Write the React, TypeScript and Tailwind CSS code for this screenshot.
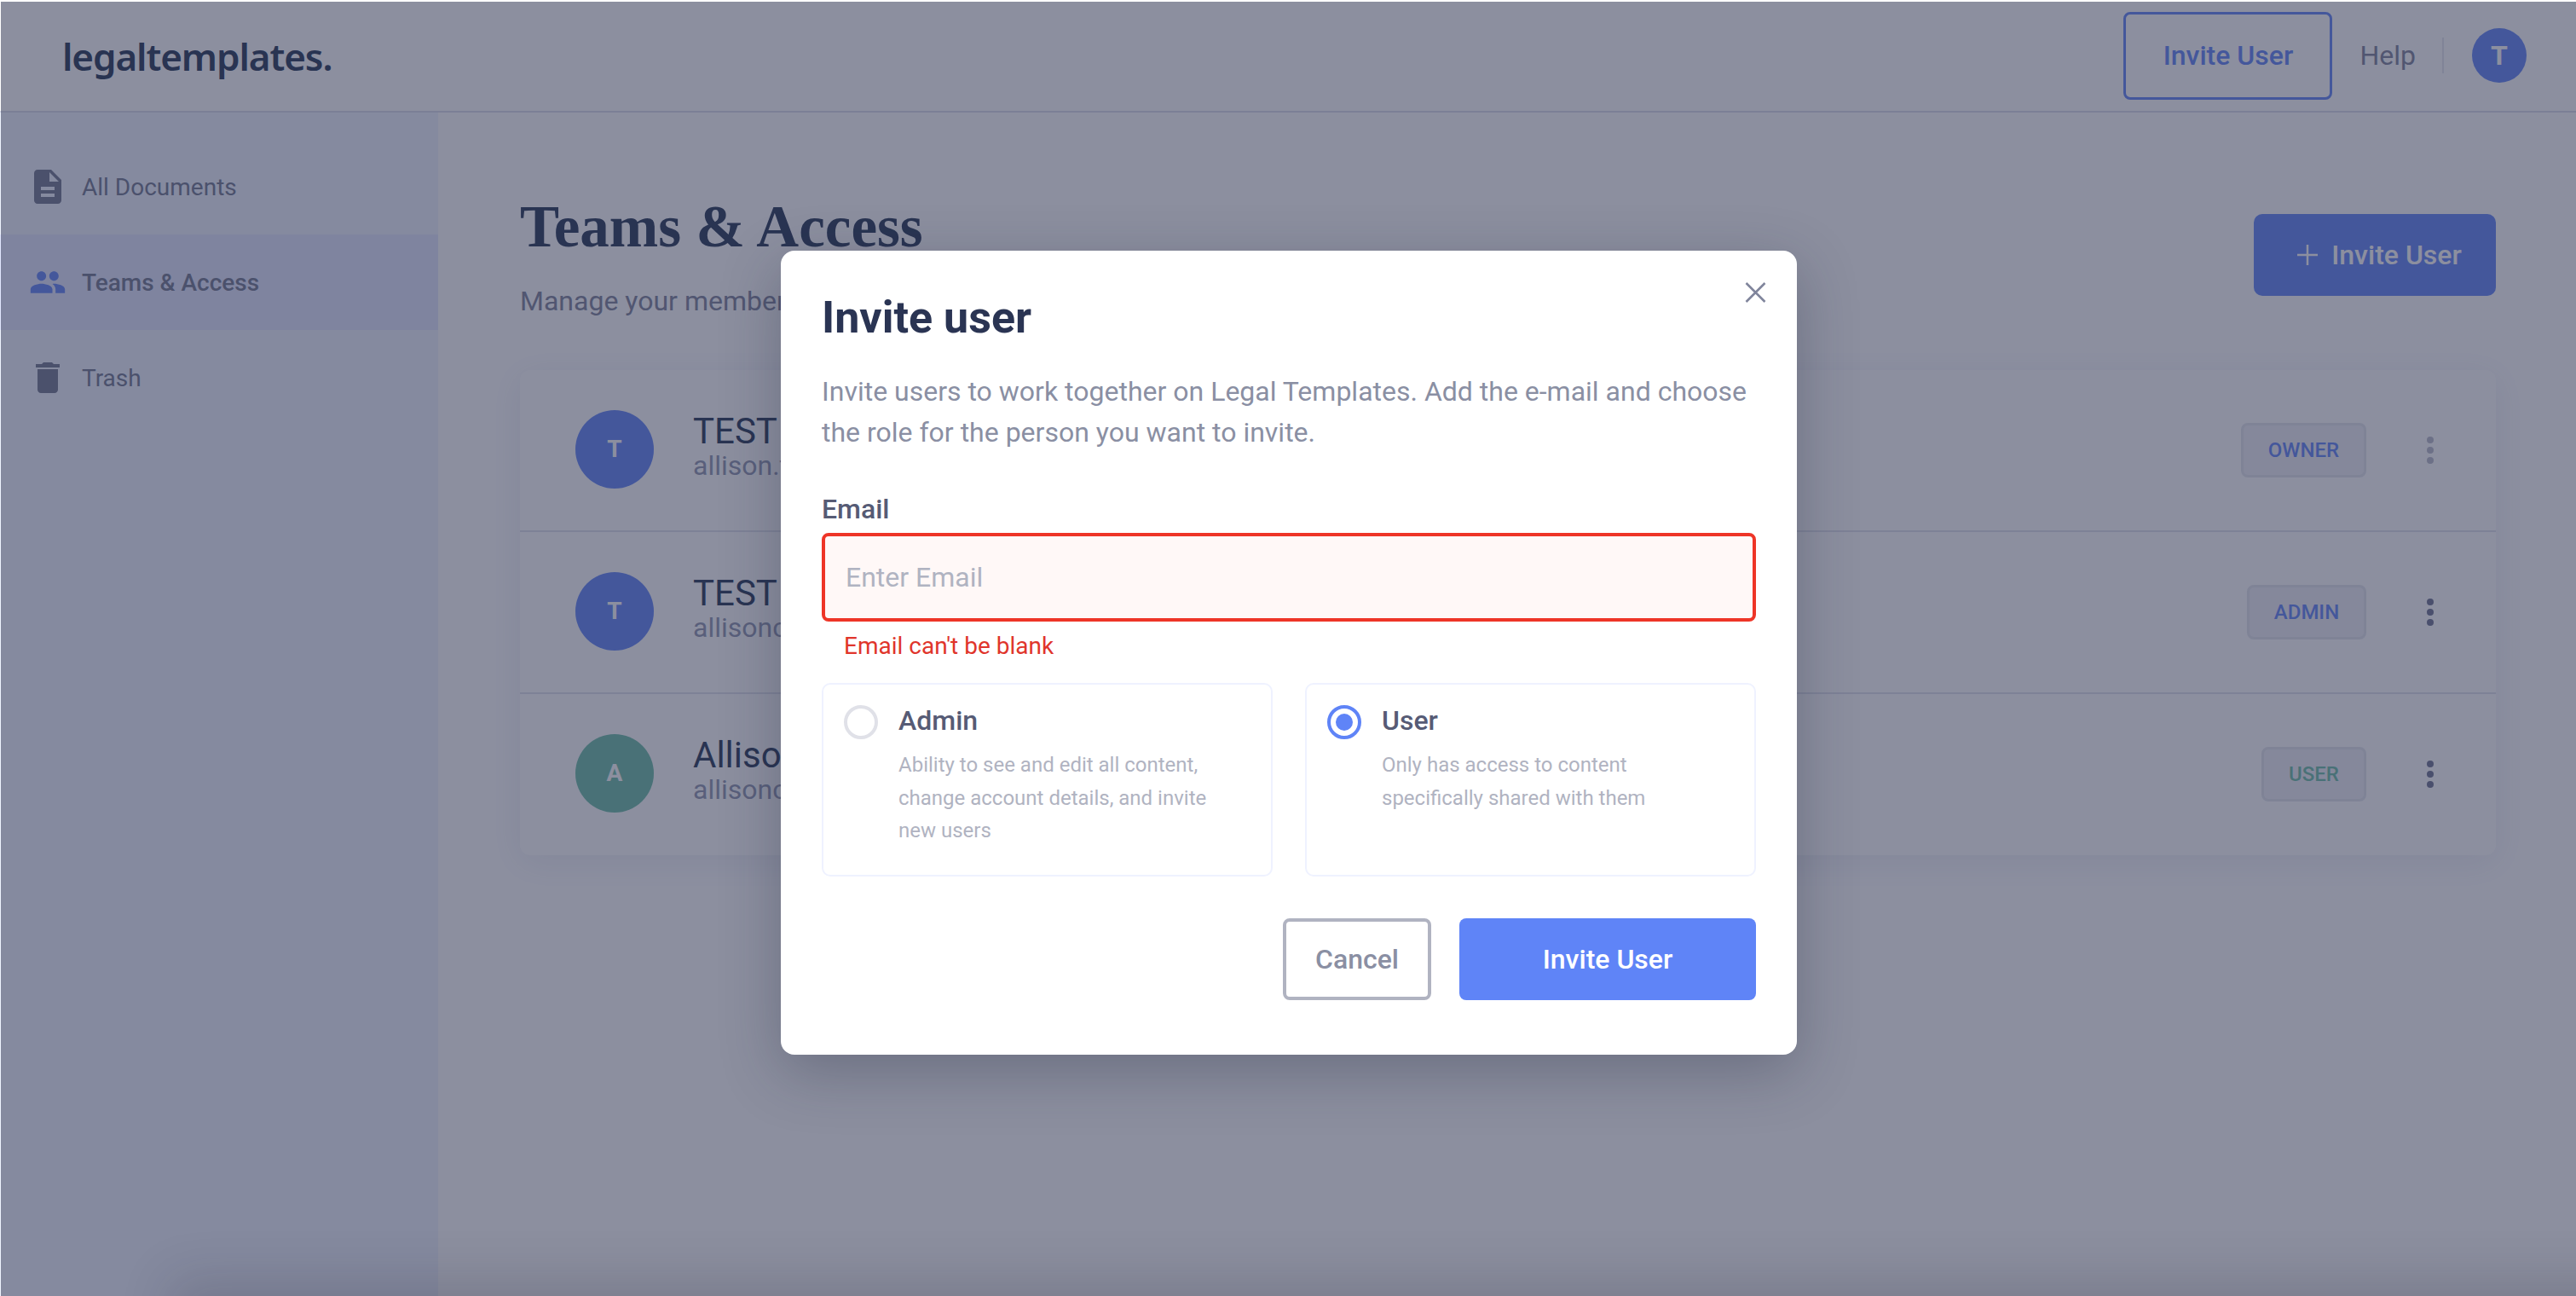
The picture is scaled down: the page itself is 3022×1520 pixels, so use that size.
import React from "react";
import { MdDescription, MdPeople, MdDelete } from "react-icons/md";

const roboto = "font-['Roboto',sans-serif]";

function Row({ letter, name, email, role, avatar, roleText, badgeW, dots, last }: { letter: string; name: string; email: string; role: string; avatar: string; roleText: string; badgeW: string; dots: string; last?: boolean }) {
  return (
    <div className={`flex items-start pl-[65px] ${last ? "h-[189px]" : "h-[190px] border-b-[2px] border-[#dfe2ec]"}`}>
      <div className={`mt-[47px] flex h-[92px] w-[92px] shrink-0 items-center justify-center rounded-full text-[28px] font-bold text-white ${avatar}`}>{letter}</div>
      <div className="ml-[46px] mt-[47px] min-w-0 flex-1">
        <div className="text-[42px] leading-[50px] text-[#253556]">{name}</div>
        <div className="mt-[-5px] text-[32px] leading-[40px] text-[#8f96b0]">{email}</div>
      </div>
      <div className={`mt-[62px] flex h-[64px] items-center justify-center rounded-[8px] border-[3px] border-[#e2e4ec] bg-[#eff0f5] text-[24px] font-medium ${badgeW} ${roleText}`}>{role}</div>
      <div className="mt-[78px] ml-[71px] mr-[73px] flex w-[8px] flex-col gap-[4px]">
        <span className={`h-[8px] w-[8px] rounded-full ${dots}`} />
        <span className={`h-[8px] w-[8px] rounded-full ${dots}`} />
        <span className={`h-[8px] w-[8px] rounded-full ${dots}`} />
      </div>
    </div>
  );
}

function Role({ title, lines, on }: { title: string; lines: string[]; on?: boolean }) {
  return (
    <div className="flex h-[227px] flex-1 rounded-[10px] border-[2px] border-[#eff2ff] pl-[24px] pt-[24px]">
      {on ? (
        <div className="flex h-[40px] w-[40px] shrink-0 items-center justify-center rounded-full border-[4px] border-[#5f84f7]">
          <span className="h-[20px] w-[20px] rounded-full bg-[#5f84f7]" />
        </div>
      ) : (
        <div className="h-[40px] w-[40px] shrink-0 rounded-full border-[4px] border-[#e0e1e8]" />
      )}
      <div className="ml-[24px] mt-[-2px]">
        <div className="text-[32px] leading-[40px] font-medium text-[#565b75]">{title}</div>
        <div className="mt-[13px] text-[24px] leading-[38.5px] text-[#b0b3c1]">
          {lines.map((l) => (
            <div key={l}>{l}</div>
          ))}
        </div>
      </div>
    </div>
  );
}

export default function App() {
  return (
    <div className={`relative h-[1520px] w-[3022px] overflow-hidden bg-white ${roboto}`}>
      <header className="flex h-[132px] items-center border-b-[2px] border-[#d9dcec] pl-[73px] pr-[58px]">
        <div className="flex-1 pt-[2px] font-['Noto_Sans',sans-serif] text-[44px] font-semibold tracking-[-1.1px] text-[#253556]">legaltemplates.</div>
        <button className="h-[103px] w-[245px] rounded-[8px] border-[3px] border-[#5f84f7] text-[32px] font-medium text-[#5f84f7]">Invite User</button>
        <span className="ml-[32px] text-[32px] text-[#7c8199]">Help</span>
        <span className="ml-[31px] h-[42px] w-[2px] bg-[#e4e6ee]" />
        <div className="ml-[33px] flex h-[64px] w-[64px] items-center justify-center rounded-full bg-[#5f84f7] text-[32px] font-bold text-white">T</div>
      </header>
      <div className="flex h-[1388px]">
        <aside className="w-[514px] shrink-0 bg-[#eff4ff] pt-[31px] text-[28px] text-[#70768f]">
          <div className="flex h-[112px] items-center gap-[16px] pl-[32px]">
            <MdDescription className="h-[48px] w-[48px]" />
            <span className="pt-[2px]">All Documents</span>
          </div>
          <div className="flex h-[112px] items-center gap-[18px] bg-[#e2e7ff] pl-[34px] font-medium">
            <MdPeople className="h-[44px] w-[44px] text-[#5f84f7]" />
            <span className="pt-[2px]">Teams &amp; Access</span>
          </div>
          <div className="flex h-[112px] items-center gap-[16px] pl-[32px]">
            <MdDelete className="h-[48px] w-[48px]" />
            <span className="pt-[2px]">Trash</span>
          </div>
        </aside>
        <main className="flex-1 pl-[96px] pr-[94px]">
          <div className="flex h-[302px] items-start justify-between pt-[119px]">
            <div>
              <h1 className="mt-[-20px] font-['Liberation_Serif',serif] text-[69px] leading-[70px] font-bold text-[#253556]">Teams &amp; Access</h1>
              <p className="mt-[32px] text-[32px] leading-[40px] text-[#7c8199]">Manage your members and their permissions</p>
            </div>
            <button className="flex h-[96px] w-[284px] items-center justify-center gap-[15px] rounded-[10px] bg-[#5f84f7] pl-[10px] text-[32px] font-medium text-white">
              <svg width="26" height="26" viewBox="0 0 26 26" stroke="currentColor" strokeWidth="2.5"><path d="M13 1v24M1 13h24" /></svg>
              <span>Invite User</span>
            </button>
          </div>
          <div className="rounded-[12px] bg-white shadow-[0_8px_40px_rgba(60,80,160,0.1)]">
            <Row letter="T" name="TEST USER" email="allison.test@example.com" role="OWNER" avatar="bg-[#5f84f7]" roleText="text-[#5f84f7]" badgeW="w-[147px]" dots="bg-[#b8bbc9]" />
            <Row letter="T" name="TEST ADMIN" email="allisonc@example.com" role="ADMIN" avatar="bg-[#5f84f7]" roleText="text-[#5f84f7]" badgeW="w-[140px]" dots="bg-[#6d7290]" />
            <Row letter="A" name="Allison C" email="allisonc@example.com" role="USER" avatar="bg-[#6bbda7]" roleText="text-[#6bbda7]" badgeW="w-[123px]" dots="bg-[#6d7290]" last />
          </div>
        </main>
      </div>

      <div className="absolute bottom-0 left-[1px] right-0 top-[2px] bg-[rgba(46,51,80,0.55)]" />
      <div className="absolute left-[220px] right-[-100px] top-[1520px] h-[40px] shadow-[0_0_60px_20px_rgba(30,30,50,0.16)]" />
      <div className="absolute left-[916px] top-[294px] h-[943px] w-[1192px] rounded-[16px] bg-white px-[48px] shadow-[0_20px_70px_rgba(30,35,60,0.3)]">
        <svg className="absolute right-[36px] top-[37px]" width="25" height="24" viewBox="0 0 25 24" fill="none" stroke="#7f849b" strokeWidth="2.5"><path d="M1.5 1l22 22M23.5 1l-22 22" /></svg>
        <h2 className="pt-[49px] text-[52px] leading-[60px] font-bold text-[#2a3453]">Invite user</h2>
        <p className="mt-[32px] text-[32px] leading-[48px] text-[#8a8fa3]">Invite users to work together on Legal Templates. Add the e-mail and choose the role for the person you want to invite.</p>
        <div className="mt-[46px] text-[32px] leading-[40px] font-medium text-[#565b75]">Email</div>
        <div className="mt-[8px] flex h-[104px] items-center rounded-[8px] border-[4px] border-[#ee3527] bg-[#fff8f7] pl-[24px] text-[32px] text-[#b0b3c1]">Enter Email</div>
        <div className="mt-[11px] pl-[26px] text-[28px] leading-[36px] text-[#e0352b]">Email can&apos;t be blank</div>
        <div className="mt-[25px] flex gap-[38px]">
          <Role title="Admin" lines={["Ability to see and edit all content,", "change account details, and invite", "new users"]} />
          <Role title="User" lines={["Only has access to content", "specifically shared with them"]} on />
        </div>
        <div className="mt-[49px] flex justify-end gap-[33px]">
          <button className="h-[96px] w-[174px] rounded-[8px] border-[4px] border-[#b0b3c1] text-[32px] font-medium text-[#8a8fa3]">Cancel</button>
          <button className="h-[96px] w-[348px] rounded-[8px] bg-[#5f84f7] text-[32px] font-medium text-white">Invite User</button>
        </div>
      </div>
    </div>
  );
}
